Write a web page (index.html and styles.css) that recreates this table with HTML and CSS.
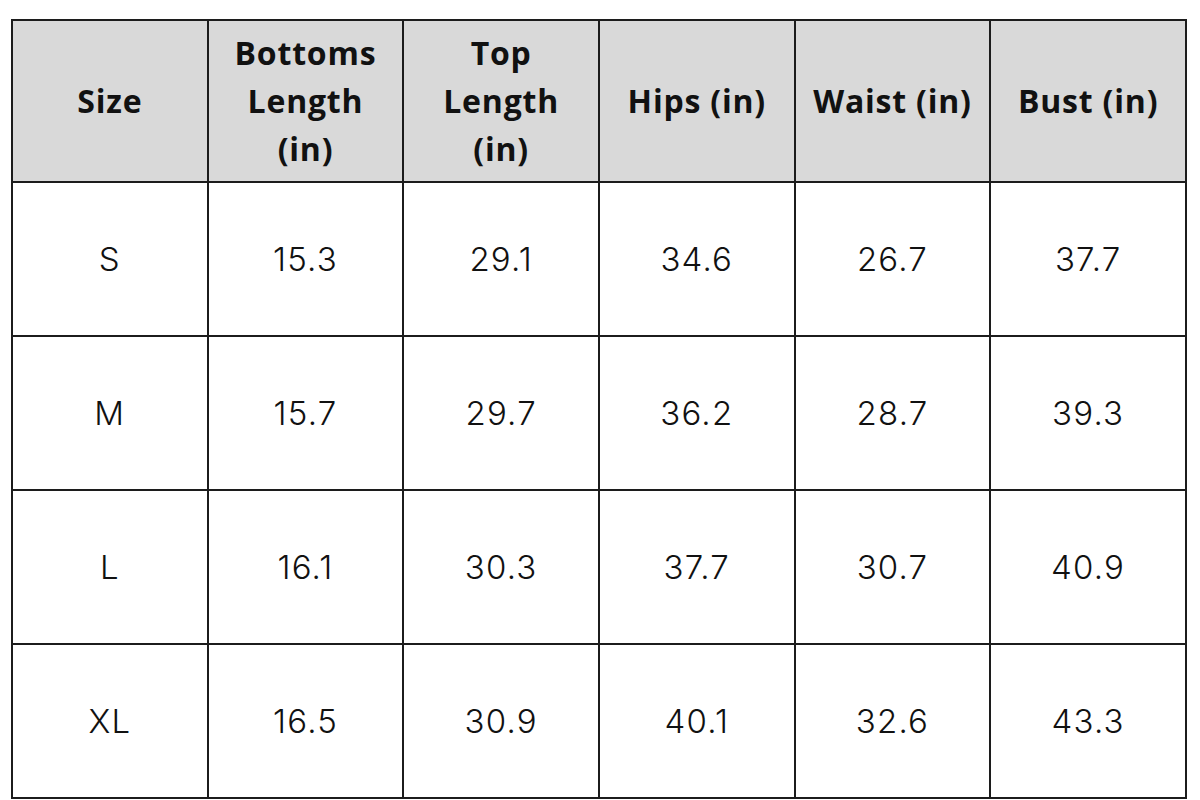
FILE: index.html
```html
<!DOCTYPE html>
<html lang="en">
<head>
<meta charset="utf-8">
<title>Size Chart</title>
<link rel="stylesheet" href="styles.css">
</head>
<body>
<table class="chart">
  <thead>
    <tr class="head-row">
      <th>Size</th>
      <th>Bottoms<br>Length<br>(in)</th>
      <th>Top<br>Length<br>(in)</th>
      <th>Hips (in)</th>
      <th>Waist (in)</th>
      <th>Bust (in)</th>
    </tr>
  </thead>
  <tbody>
    <tr><td>S</td><td>15.3</td><td>29.1</td><td>34.6</td><td>26.7</td><td>37.7</td></tr>
    <tr><td>M</td><td>15.7</td><td>29.7</td><td>36.2</td><td>28.7</td><td>39.3</td></tr>
    <tr><td>L</td><td>16.1</td><td>30.3</td><td>37.7</td><td>30.7</td><td>40.9</td></tr>
    <tr><td>XL</td><td>16.5</td><td>30.9</td><td>40.1</td><td>32.6</td><td>43.3</td></tr>
  </tbody>
</table>
</body>
</html>
```
FILE: styles.css
```css
html, body {
  margin: 0;
  padding: 0;
  background: #ffffff;
}
body {
  padding: 19px 0 0 11px;
  font-family: "Inter", "Open Sans", "Liberation Sans", sans-serif;
  color: #111111;
}
.chart {
  width: 1176px;
  table-layout: fixed;
  border-collapse: separate;
  border-spacing: 2px;
  background: #1c1c1c;
}
.chart th,
.chart td {
  padding: 0;
  text-align: center;
  vertical-align: middle;
}
.chart th {
  height: 160px;
  background: #d9d9d9;
  font-family: "Open Sans", "Liberation Sans", sans-serif;
  font-weight: 700;
  font-size: 32px;
  letter-spacing: 0.8px;
  line-height: 48px;
}
.chart td {
  height: 152px;
  background: #ffffff;
  font-weight: 300;
  font-size: 33px;
  letter-spacing: 1.2px;
  line-height: 40px;
}
```
